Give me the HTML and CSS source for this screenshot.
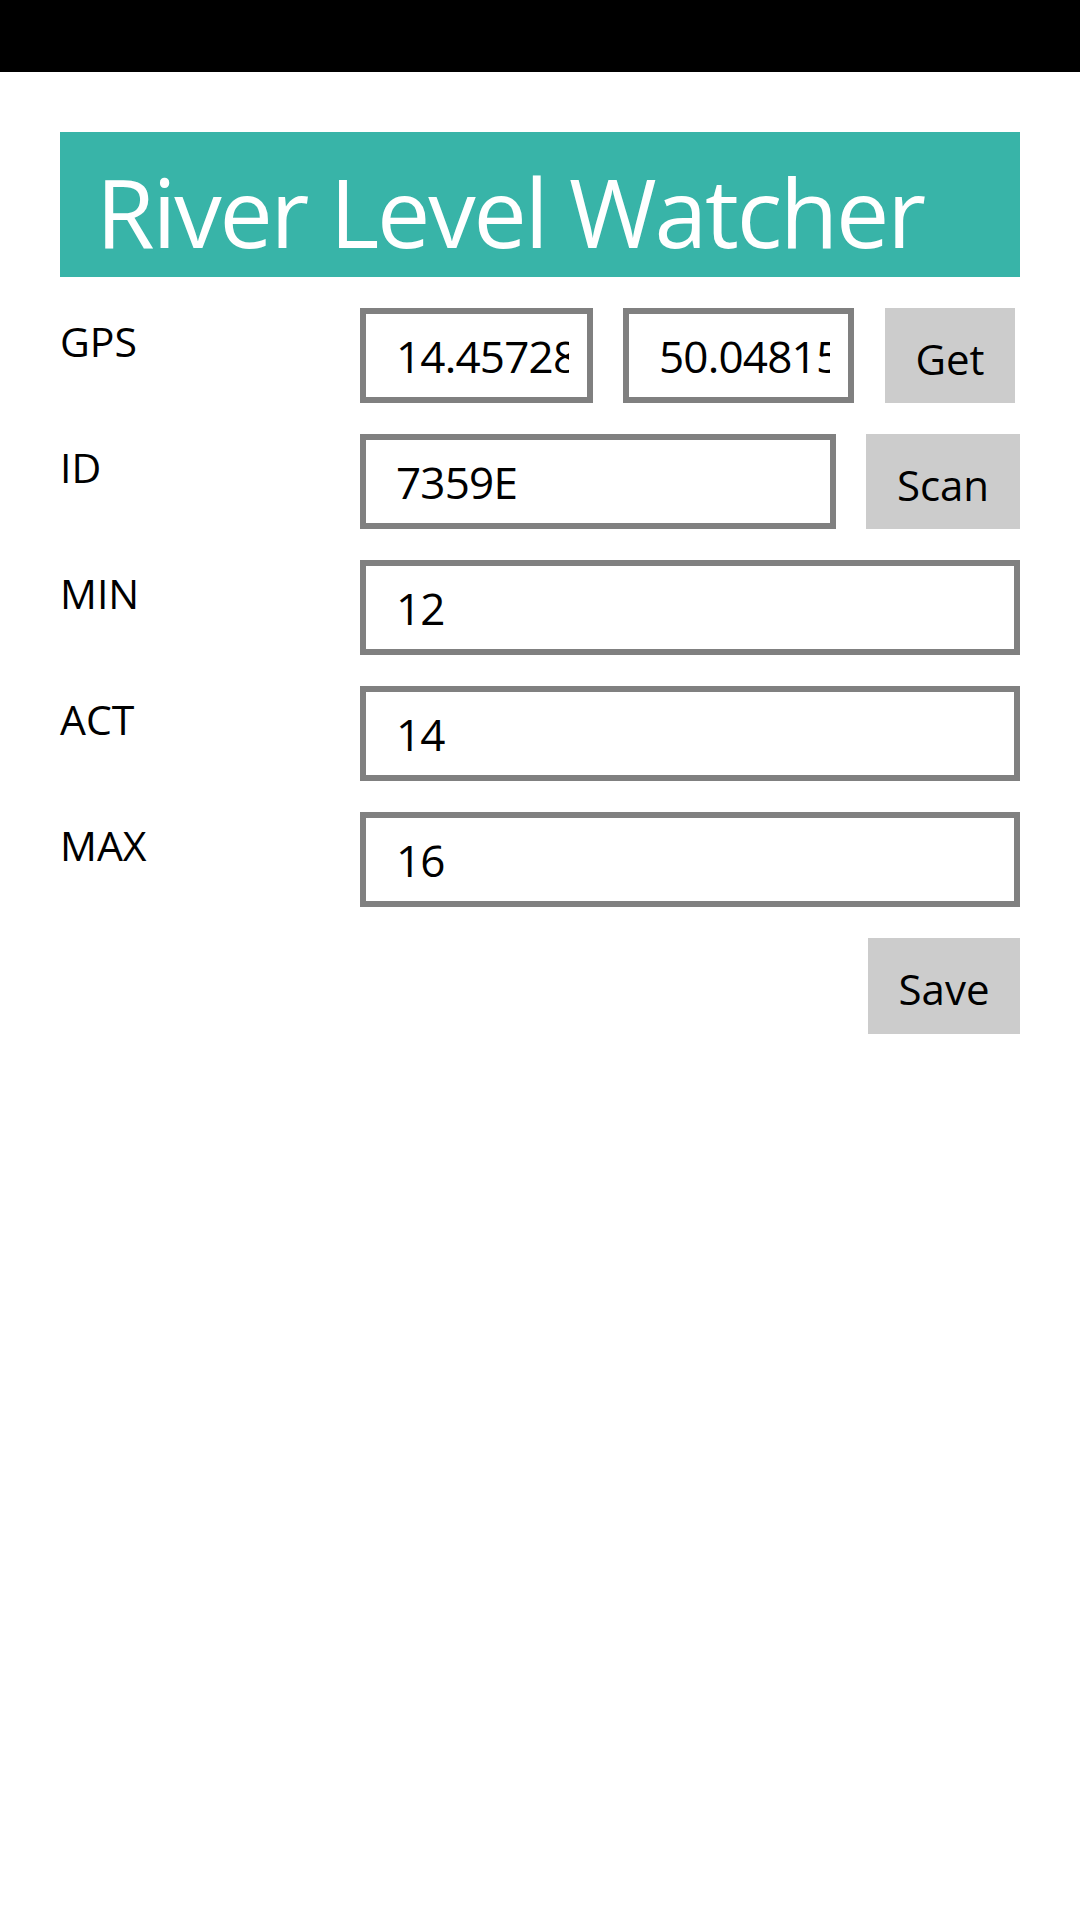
FILE: index.html
```html
<!DOCTYPE html>
<html lang="en">
<head>
<meta charset="utf-8">
<title>River Level Watcher</title>
<link rel="stylesheet" href="styles.css">
</head>
<body>
<div class="statusbar"></div>
<main class="page">
  <header class="title-bar"><h1 class="title">River Level Watcher</h1></header>
  <div class="form">
    <div class="row">
      <label class="label">GPS</label>
      <div class="controls">
        <input class="field field-lat" type="text" value="14.457283">
        <input class="field field-lon" type="text" value="50.048153">
        <button class="btn btn-get">Get</button>
      </div>
    </div>
    <div class="row">
      <label class="label">ID</label>
      <div class="controls">
        <input class="field field-id" type="text" value="7359E">
        <button class="btn btn-scan">Scan</button>
      </div>
    </div>
    <div class="row">
      <label class="label">MIN</label>
      <div class="controls">
        <input class="field field-full" type="text" value="12">
      </div>
    </div>
    <div class="row">
      <label class="label">ACT</label>
      <div class="controls">
        <input class="field field-full" type="text" value="14">
      </div>
    </div>
    <div class="row">
      <label class="label">MAX</label>
      <div class="controls">
        <input class="field field-full" type="text" value="16">
      </div>
    </div>
    <div class="row row-actions">
      <button class="btn btn-save">Save</button>
    </div>
  </div>
</main>
</body>
</html>
```

FILE: styles.css
```css
* {
  box-sizing: border-box;
}

html, body {
  margin: 0;
  padding: 0;
  background: #ffffff;
  font-family: "Open Sans", "Noto Sans", sans-serif;
  color: #000000;
}

.statusbar {
  height: 72px;
  background: #000000;
}

.page {
  padding: 60px 60px 0 60px;
}

.title-bar {
  height: 145px;
  background: #38b4a8;
  padding: 32px 0 0 36px;
  overflow: hidden;
}

.title {
  margin: 0;
  font-size: 95px;
  font-weight: 400;
  line-height: 1;
  letter-spacing: -2.2px;
  color: #ffffff;
  white-space: nowrap;
}

.form {
  display: flex;
  flex-direction: column;
  gap: 31px;
  margin-top: 31px;
}

.row {
  display: flex;
  height: 95px;
}

.label {
  width: 300px;
  flex: none;
  font-size: 41px;
  line-height: 1;
  padding-top: 13px;
}

.controls {
  flex: 1;
  display: flex;
  gap: 30px;
}

.field {
  height: 95px;
  border: 6px solid #808080;
  border-radius: 0;
  background: #ffffff;
  padding: 0 18px 0 30px;
  font-family: "Open Sans", "Noto Sans", sans-serif;
  font-size: 44px;
  letter-spacing: -0.8px;
  color: #000000;
  outline: none;
  margin: 0;
  min-width: 0;
}

.field-lat {
  width: 233px;
  flex: none;
}

.field-lon {
  width: 231px;
  flex: none;
}

.field-id {
  width: 476px;
  flex: none;
}

.field-full {
  flex: 1;
}

.btn {
  height: 95px;
  border: none;
  border-radius: 0;
  background: #cccccc;
  font-family: "Open Sans", "Noto Sans", sans-serif;
  font-size: 42px;
  color: #000000;
  padding: 5px 0 0 0;
  margin: 0;
  flex: none;
}

.btn-get {
  width: 130px;
  margin-left: 1px;
}

.btn-scan {
  width: 154px;
}

.row-actions {
  justify-content: flex-end;
  height: 96px;
}

.btn-save {
  width: 152px;
  height: 96px;
}
```
